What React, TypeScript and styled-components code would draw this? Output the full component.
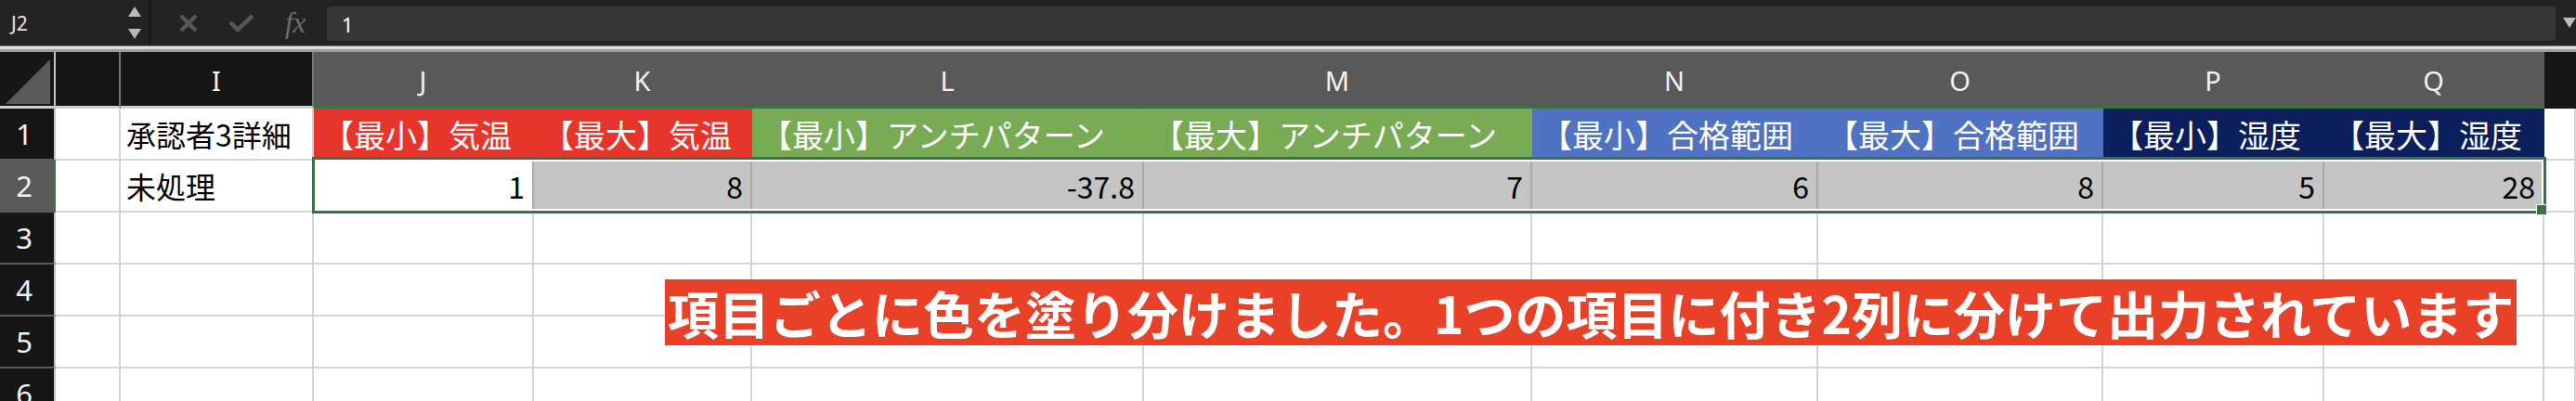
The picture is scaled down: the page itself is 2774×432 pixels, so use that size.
import React from "react";
import styled, { createGlobalStyle } from "styled-components";

const Global = createGlobalStyle`
  html, body { margin: 0; padding: 0; background: #ffffff; }
  body { font-family: "Noto Sans CJK JP", "Noto Sans", sans-serif; overflow: hidden; }
  #root { width: 2774px; height: 432px; overflow: hidden; }
`;

const GREEN = "#3c7046";
const GRID = "#d4d4d4";

const Page = styled.div`
  width: 2774px;
  height: 432px;
  overflow: hidden;
  display: flex;
  flex-direction: column;
  background: #ffffff;
`;

const FormulaBar = styled.div`
  flex: none;
  display: flex;
  align-items: center;
  height: 49px;
  background: #232323;
`;

const NameBox = styled.div`
  width: 160px;
  height: 100%;
  box-sizing: border-box;
  display: flex;
  align-items: center;
  justify-content: space-between;
  padding: 0 8px 0 12px;
  font-family: "Noto Sans", sans-serif;
  font-size: 21px;
  color: #e6e6e6;
`;

const Spinner = styled.div`
  display: flex;
  flex-direction: column;
  justify-content: space-between;
  height: 35px;
`;

const Tri = styled.div<{ $dir: "up" | "down"; $color?: string }>`
  width: 14px;
  height: 11px;
  background: ${(p) => p.$color || "#b8b8b8"};
  clip-path: ${(p) =>
    p.$dir === "up" ? "polygon(50% 0, 100% 100%, 0 100%)" : "polygon(0 0, 100% 0, 50% 100%)"};
`;

const VSep = styled.div`
  width: 3px;
  height: 100%;
  background: #191919;
`;

const Tools = styled.div`
  display: flex;
  align-items: center;
  gap: 33px;
  margin-left: 30px;
`;

const ToolIcon = styled.svg`
  display: block;
  flex: none;
`;

const Fx = styled.span`
  font-family: "Liberation Serif", "DejaVu Serif", serif;
  font-style: italic;
  font-size: 31px;
  line-height: 1;
  color: #6e6e6e;
  width: 30px;
`;

const FormulaInput = styled.div`
  flex: 1;
  align-self: stretch;
  margin: 7px 8px 5px 15px;
  border-radius: 4px;
  background: #373737;
  display: flex;
  align-items: center;
  padding-left: 16px;
  font-family: "Noto Sans", sans-serif;
  font-size: 22px;
  color: #ffffff;
`;

const BarRule = styled.div`
  flex: none;
  height: 7px;
  background: linear-gradient(
    to bottom,
    #7c7c7c 0,
    #7c7c7c 1px,
    #e8e8e8 1px,
    #d8d8d8 4px,
    #9c9c9c 4px,
    #9c9c9c 7px
  );
`;

const Grid = styled.div`
  position: relative;
  flex: none;
  display: grid;
  grid-template-columns: 60px 70px 208px 237px 235px 422px 418px 308px 307px 238px 237px 1fr;
  grid-template-rows: 61px repeat(6, 56px);
`;

const Corner = styled.div`
  box-sizing: border-box;
  background: #161616;
  border-right: 2px solid #c4c4c4;
  border-bottom: 3px solid #cfcfcf;
  display: flex;
  align-items: flex-end;
  justify-content: flex-end;
  padding: 0 4px 2px 0;
`;

const CornerMark = styled.div`
  width: 48px;
  height: 48px;
  background: #5a5a5a;
  clip-path: polygon(100% 0, 100% 100%, 0 100%);
`;

const ColHead = styled.div<{ $sel?: boolean; $edge?: boolean }>`
  box-sizing: border-box;
  display: flex;
  align-items: center;
  justify-content: center;
  padding-top: 2px;
  background: ${(p) => (p.$sel ? "#595959" : "#161616")};
  border-right: 2px solid ${(p) => (p.$sel ? "#595959" : p.$edge ? "#161616" : "#747474")};
  border-bottom: 3px solid ${(p) => (p.$sel ? GREEN : p.$edge ? "#161616" : "#cfcfcf")};
  font-family: "Noto Sans", sans-serif;
  font-size: 29px;
  color: #f2f2f2;
`;

const RowHead = styled.div<{ $sel?: boolean }>`
  box-sizing: border-box;
  display: flex;
  align-items: center;
  justify-content: center;
  padding-right: 6px;
  background: ${(p) => (p.$sel ? "#595959" : "#161616")};
  border-right: 2px solid ${(p) => (p.$sel ? GREEN : "#c4c4c4")};
  border-bottom: 2px solid #5c5c5c;
  font-family: "Noto Sans", sans-serif;
  font-size: 31px;
  color: #f4f4f4;
`;

const Cell = styled.div<{
  $bg?: string;
  $fg?: string;
  $right?: boolean;
  $vline?: string;
  $pad?: number;
  $size?: number;
}>`
  box-sizing: border-box;
  display: flex;
  align-items: center;
  justify-content: ${(p) => (p.$right ? "flex-end" : "flex-start")};
  padding: ${(p) => (p.$right ? "0 8px 0 0" : `0 0 0 ${p.$pad ?? 6}px`)};
  background: ${(p) => p.$bg || "#ffffff"};
  color: ${(p) => p.$fg || "#000000"};
  border-right: 2px solid ${(p) => p.$vline || GRID};
  border-bottom: 2px solid ${GRID};
  font-size: ${(p) => p.$size ?? 32}px;
  white-space: nowrap;
  overflow: hidden;
`;

const Selection = styled.div`
  position: absolute;
  left: 336px;
  top: 113px;
  width: 2406px;
  height: 61px;
  box-sizing: border-box;
  border: 3px solid ${GREEN};
  box-shadow: inset 0 0 0 2px #ffffff;
  pointer-events: none;
`;

const FillHandle = styled.div`
  position: absolute;
  right: -4px;
  bottom: -5px;
  width: 12px;
  height: 12px;
  box-sizing: border-box;
  background: ${GREEN};
  border: 1px solid #ffffff;
`;

const Banner = styled.div`
  position: absolute;
  left: 716px;
  top: 245px;
  height: 71px;
  padding: 0 3px;
  background: #e84128;
  color: #ffffff;
  font-family: "Noto Sans CJK JP", sans-serif;
  font-weight: 700;
  font-size: 55px;
  line-height: 71px;
  white-space: nowrap;
`;

const RED = "#e8352b";
const LEAF = "#79ab55";
const BLUE = "#4f73c2";
const NAVY = "#0b1f5c";

const headers = [
  { l: "", sel: false },
  { l: "I", sel: false },
  { l: "J", sel: true },
  { l: "K", sel: true },
  { l: "L", sel: true },
  { l: "M", sel: true },
  { l: "N", sel: true },
  { l: "O", sel: true },
  { l: "P", sel: true },
  { l: "Q", sel: true },
];

const titles = [
  { t: "【最小】気温", bg: RED },
  { t: "【最大】気温", bg: RED },
  { t: "【最小】アンチパターン", bg: LEAF },
  { t: "【最大】アンチパターン", bg: LEAF },
  { t: "【最小】合格範囲", bg: BLUE },
  { t: "【最大】合格範囲", bg: BLUE },
  { t: "【最小】湿度", bg: NAVY },
  { t: "【最大】湿度", bg: NAVY },
];

const values = ["1", "8", "-37.8", "7", "6", "8", "5", "28"];

export default function App() {
  return (
    <Page>
      <Global />
      <FormulaBar>
        <NameBox>
          <span>J2</span>
          <Spinner>
            <Tri $dir="up" />
            <Tri $dir="down" />
          </Spinner>
        </NameBox>
        <VSep />
        <Tools>
          <ToolIcon width="20" height="20" viewBox="0 0 20 20">
            <path d="M2 2 L18 18 M18 2 L2 18" stroke="#575757" strokeWidth="4.5" fill="none" />
          </ToolIcon>
          <ToolIcon width="28" height="20" viewBox="0 0 28 20">
            <path d="M2 9 L10 17 L26 2" stroke="#575757" strokeWidth="4.5" fill="none" />
          </ToolIcon>
          <Fx>fx</Fx>
        </Tools>
        <FormulaInput>1</FormulaInput>
        <Tri $dir="down" $color="#bdbdbd" />
      </FormulaBar>
      <BarRule />
      <Grid>
        <Corner>
          <CornerMark />
        </Corner>
        {headers.map((h, i) => (
          <ColHead key={"h" + i} $sel={h.sel}>
            {h.l}
          </ColHead>
        ))}
        <ColHead $edge />

        <RowHead>1</RowHead>
        <Cell />
        <Cell>承認者3詳細</Cell>
        {titles.map((c, i) => (
          <Cell key={"t" + i} $bg={c.bg} $fg="#ffffff" $vline={c.bg} $pad={9} $size={34}>
            {c.t}
          </Cell>
        ))}
        <Cell />

        <RowHead $sel>2</RowHead>
        <Cell />
        <Cell>未処理</Cell>
        {values.map((v, i) => (
          <Cell key={"v" + i} $right $bg={i === 0 ? "#ffffff" : "#c5c5c5"} $vline="#a9a9a9">
            {v}
          </Cell>
        ))}
        <Cell />

        {[3, 4, 5, 6].map((r) => (
          <React.Fragment key={"r" + r}>
            <RowHead>{r}</RowHead>
            {Array.from({ length: 11 }).map((_, i) => (
              <Cell key={r + "-" + i} />
            ))}
          </React.Fragment>
        ))}

        <Selection>
          <FillHandle />
        </Selection>
        <Banner>項目ごとに色を塗り分けました。1つの項目に付き2列に分けて出力されています</Banner>
      </Grid>
    </Page>
  );
}
